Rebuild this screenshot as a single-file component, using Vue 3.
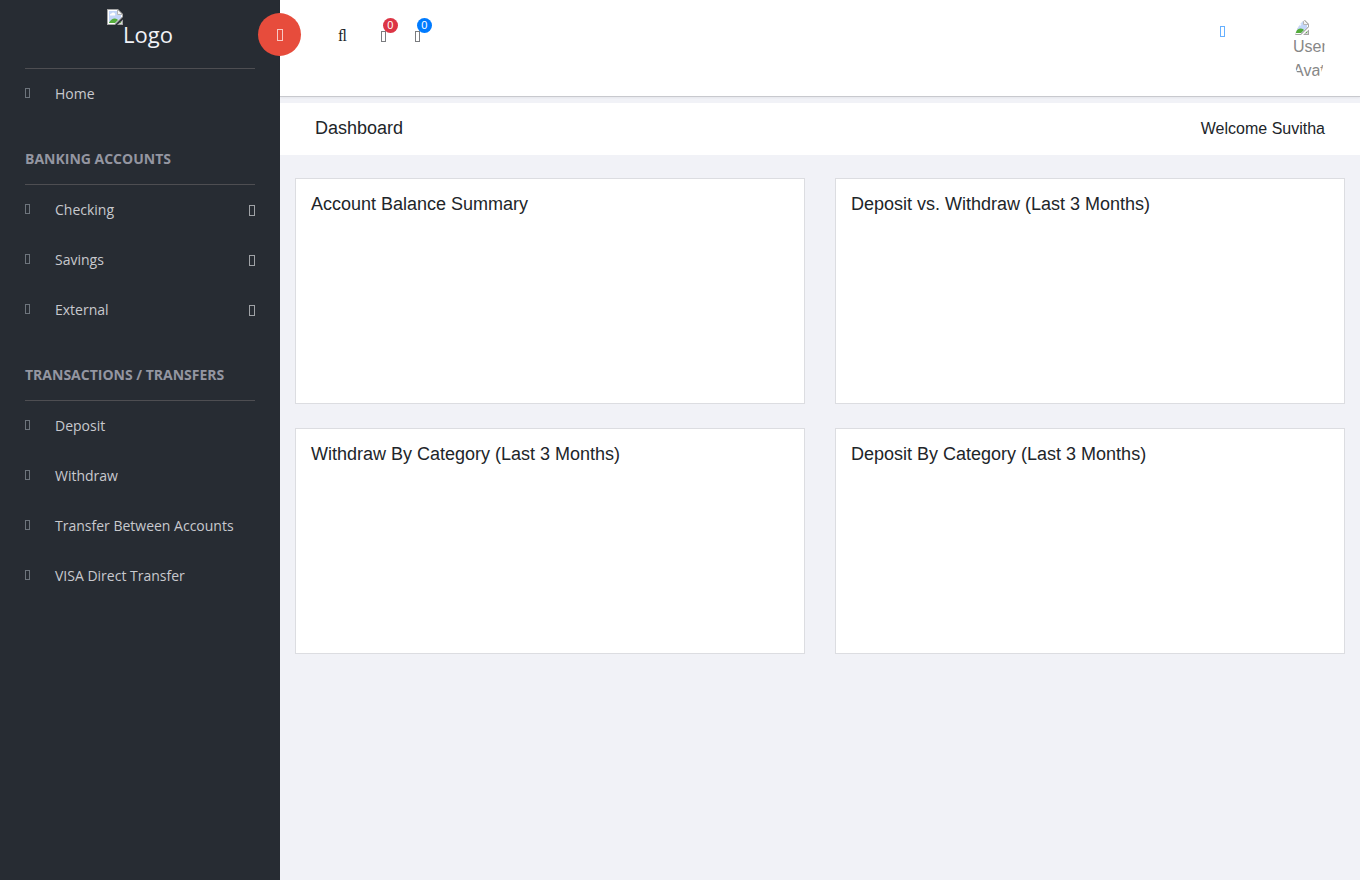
<script setup>
const sections = [
  { title: '', items: [{ label: 'Home' }] },
  {
    title: 'Banking Accounts',
    items: [
      { label: 'Checking', menu: true },
      { label: 'Savings', menu: true },
      { label: 'External', menu: true },
    ],
  },
  {
    title: 'Transactions / Transfers',
    items: [
      { label: 'Deposit' },
      { label: 'Withdraw' },
      { label: 'Transfer Between Accounts' },
      { label: 'VISA Direct Transfer' },
    ],
  },
]
const cards = [
  'Account Balance Summary',
  'Deposit vs. Withdraw (Last 3 Months)',
  'Withdraw By Category (Last 3 Months)',
  'Deposit By Category (Last 3 Months)',
]
</script>

<template>
  <div class="page">
    <svg class="defs" aria-hidden="true">
      <symbol id="picture" viewBox="0 0 16 16">
        <path d="M0 0H11L16 5V8L8 16H0Z" fill="#a5a5a5" />
        <path d="M1 1H10.500L15 5.500V7.500L7.500 15H1Z" fill="#fff" />
        <path d="M2 2H10V6H14V8.500L8 14H2Z" fill="#c3d6f8" />
        <path d="M3 6.500a1.500 1.500 0 0 1 1.500-2 1.800 1.800 0 0 1 3.500 2Z" fill="#fff" />
        <path d="M2 14V13.500Q5 9 8 9.500Q10 9.500 11 11L8 14Z" fill="#55ac3b" />
        <path d="M10.500 .5V5.500H15.500Z" fill="#f4f4f4" stroke="#a5a5a5" stroke-width=".8" />
        <path d="M16 10.500V16H10Z" fill="#a5a5a5" />
        <path d="M15 12.500V15H12Z" fill="#d8d8d8" />
        <path d="M14 12.500V14H12.500Z" fill="#55ac3b" />
      </symbol>
    </svg>

    <aside class="sidebar">
      <a href="#" class="brand">
        <svg class="picture" aria-hidden="true"><use href="#picture" /></svg>
        <span>Logo</span>
      </a>
      <nav>
        <section v-for="section in sections" :key="section.title">
          <h3 v-if="section.title">{{ section.title }}</h3>
          <ul>
            <li v-for="item in section.items" :key="item.label">
              <a href="#" class="item">
                <span class="box small" aria-hidden="true"></span>
                <span class="label">{{ item.label }}</span>
                <span v-if="item.menu" class="box arrow" aria-hidden="true"></span>
              </a>
            </li>
          </ul>
        </section>
      </nav>
    </aside>

    <div class="main">
      <header class="topbar">
        <button class="toggle" type="button" aria-label="Toggle menu"><span class="box large"></span></button>
        <div class="tools">
          <button class="tool search" type="button" aria-label="Search">&#xfb02;</button>
          <button class="tool" type="button" aria-label="Notifications"><span class="box"></span><span class="count red">0</span></button>
          <button class="tool" type="button" aria-label="Messages"><span class="box"></span><span class="count blue">0</span></button>
        </div>
        <div class="account">
          <button class="tool pin" type="button" aria-label="Locations"><span class="box"></span></button>
          <a href="#" class="avatar">
            <svg class="picture" aria-hidden="true"><use href="#picture" /></svg>
            <span>User Avatar</span>
          </a>
        </div>
      </header>

      <div class="heading">
        <h1>Dashboard</h1>
        <span>Welcome Suvitha</span>
      </div>

      <main class="cards">
        <article v-for="card in cards" :key="card" class="card">
          <h2>{{ card }}</h2>
        </article>
      </main>
    </div>
  </div>
</template>

<style>
body {
  margin: 0;
  background: #f1f2f7;
}
</style>

<style scoped>
* {
  box-sizing: border-box;
}
.page {
  display: flex;
  min-height: 100vh;
  font-family: "Liberation Sans", Arial, sans-serif;
  font-size: 16px;
  line-height: 24px;
  color: #212529;
}
.defs {
  position: absolute;
  width: 0;
  height: 0;
}
a {
  color: inherit;
  text-decoration: none;
}
button {
  border: 0;
  padding: 0;
  background: none;
  color: inherit;
}
.box {
  display: block;
  flex: none;
  width: 5px;
  height: 11px;
  border: 1px solid currentColor;
  opacity: 0.6;
}
.small {
  width: 5px;
  height: 10px;
  margin: 0 25px 2px 0;
  color: #8b939b;
  opacity: 0.7;
}
.arrow {
  width: 6px;
  opacity: 0.75;
}
.large {
  width: 6px;
  height: 12px;
  opacity: 0.7;
}
.picture {
  display: block;
  flex: none;
  width: 16px;
  height: 16px;
}
.sidebar {
  flex: none;
  width: 280px;
  padding: 0 25px;
  background: #272c33;
  font-family: "Open Sans", sans-serif;
}
.brand {
  display: flex;
  justify-content: center;
  align-items: flex-start;
  height: 69px;
  padding-top: 9px;
  border-bottom: 1px solid #4e4e52;
  color: #f1f2f7;
  font-size: 22px;
  line-height: 50px;
}
h3 {
  margin: 15px 0 0;
  border-bottom: 1px solid #4e4e52;
  color: #9496a1;
  font-size: 14px;
  line-height: 50px;
  font-weight: 700;
  text-transform: uppercase;
}
ul {
  margin: 0;
  padding: 0;
  list-style: none;
}
.item {
  display: flex;
  align-items: center;
  color: #c8c9ce;
  font-size: 14px;
  line-height: 50px;
}
.label {
  flex: 1;
}
.main {
  flex: 1;
  min-width: 0;
}
.topbar {
  position: relative;
  display: flex;
  justify-content: space-between;
  align-items: flex-start;
  height: 97px;
  padding: 19px 35px 0 58px;
  border-bottom: 1px solid #c8c9ce;
  box-shadow: 0 1px 2px rgba(0, 0, 0, 0.05);
  background: #fff;
}
.toggle {
  position: absolute;
  top: 13px;
  left: -22px;
  display: flex;
  align-items: center;
  justify-content: center;
  width: 43px;
  height: 43px;
  border-radius: 50%;
  background: #e74c3c;
  color: #fff;
}
.tools {
  display: flex;
  gap: 29px;
  padding-top: 5px;
}
.tool {
  position: relative;
  display: flex;
  align-items: center;
  height: 24px;
  font-size: 16px;
  line-height: 24px;
}
.search {
  margin-right: 5px;
  font-family: "Liberation Serif", serif;
}
.count {
  position: absolute;
  top: -6px;
  left: 2px;
  width: 15px;
  height: 15px;
  border-radius: 50%;
  color: #fff;
  font-family: "Liberation Sans", Arial, sans-serif;
  font-size: 11px;
  line-height: 15px;
  text-align: center;
}
.red {
  background: #dc3545;
}
.blue {
  background: #007bff;
}
.account {
  display: flex;
  align-items: flex-start;
  gap: 68px;
}
.pin {
  color: #007bff;
}
.avatar {
  width: 32px;
  height: 64px;
  overflow: hidden;
  border-radius: 50%;
  color: #878787;
}
.heading {
  display: flex;
  justify-content: space-between;
  align-items: flex-start;
  margin-top: 6px;
  padding: 14px 35px;
  background: #fff;
}
h1,
h2 {
  margin: 0;
  font-size: 18px;
  line-height: 20px;
  font-weight: 400;
}
h1 {
  line-height: 22px;
}
.cards {
  display: grid;
  grid-template-columns: 1fr 1fr;
  gap: 24px 30px;
  padding: 23px 15px;
}
.card {
  min-height: 226px;
  padding: 15px;
  border: 1px solid #dcdde1;
  background: #fff;
}
</style>
